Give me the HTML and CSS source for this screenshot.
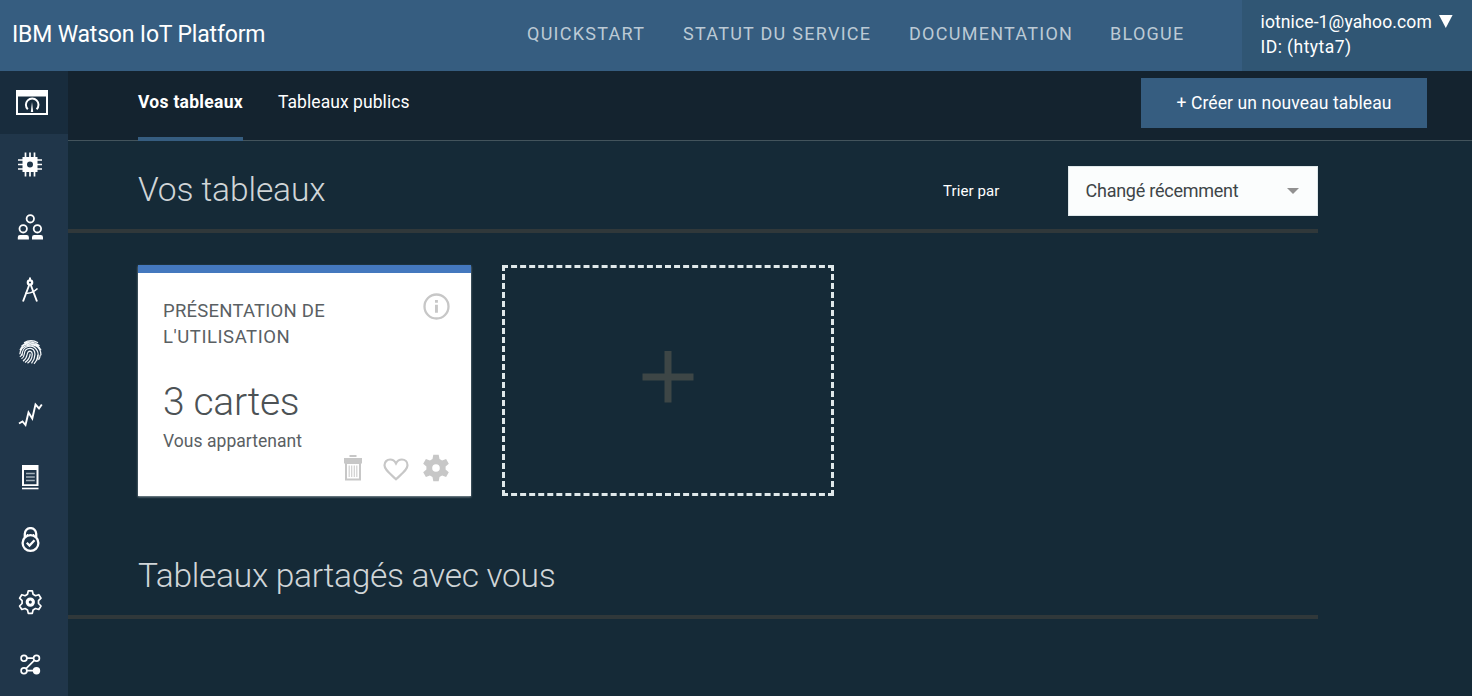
FILE: index.html
```html
<!DOCTYPE html>
<html lang="fr">
<head>
<meta charset="utf-8">
<title>IBM Watson IoT Platform</title>
<link rel="stylesheet" href="styles.css">
</head>
<body>
<header class="topbar">
  <div class="brand">IBM Watson IoT Platform</div>
  <nav class="links">
    <a class="link-quick">QUICKSTART</a>
    <a class="link-status">STATUT DU SERVICE</a>
    <a class="link-docs">DOCUMENTATION</a>
    <a class="link-blog">BLOGUE</a>
  </nav>
  <div class="account">
    <div class="account-row"><span class="mail">iotnice-1@yahoo.com</span><svg class="caret" width="14" height="13" viewBox="0 0 14 13"><path d="M0 0h13.600L6.800 13z" fill="#fff"/></svg></div>
    <div class="account-id">ID: (htyta7)</div>
  </div>
</header>
<div class="shell">
  <aside class="rail">
    <a class="rail-item active"><svg width="32" height="26" viewBox="0 0 32 26"><path fill="#fff" fill-rule="evenodd" d="M0 0h32v25H0zM2 6.500V23h28V6.500z"/><path d="M11.800 19.300a6.300 6.300 0 1 1 8.800 0" fill="none" stroke="#fff" stroke-width="2"/><path d="M16 12l1.200 10h-2.400z" fill="#fff"/></svg></a>
    <a class="rail-item"><svg width="26" height="26" viewBox="0 0 26 26"><path d="M8.500 .500v5M13 .500v5M17.500 .500v5M8.500 19.500v5M13 19.500v5M17.500 19.500v5M1 8h5M1 12.500h5M1 17h5M20 8h5M20 12.500h5M20 17h5" stroke="#fff" stroke-width="1.700"/><path fill="#fff" fill-rule="evenodd" d="M5.500 5h15v15h-15zM13 9.500a3 3 0 1 0 0 6 3 3 0 0 0 0-6z"/></svg></a>
    <a class="rail-item"><svg width="26" height="26" viewBox="0 0 26 26"><g fill="none" stroke="#fff" stroke-width="1.800"><circle cx="13.300" cy="4.800" r="3.700"/><circle cx="6.200" cy="14.800" r="3.700"/><circle cx="20.400" cy="14.800" r="3.700"/></g><path fill="#fff" d="M.800 25.500v-2.300q0-2.200 2.200-2.200h6.700q2.200 0 2.200 2.200v2.300zM15 25.500v-2.300q0-2.200 2.200-2.200h6.600q2.200 0 2.200 2.200v2.300z"/></svg></a>
    <a class="rail-item"><svg width="26" height="26" viewBox="0 0 26 26"><g fill="none" stroke="#fff"><path d="M13 .500v3" stroke-width="2"/><circle cx="13" cy="5.500" r="2.200" stroke-width="2.200"/><path d="M12.200 8L6 24.500M13.800 8L20 24.500" stroke-width="1.900"/><path d="M8.500 16q6 1.200 12-4.500" stroke-width="1.600"/></g></svg></a>
    <a class="rail-item"><svg width="26" height="26" viewBox="0 0 26 26"><g transform="translate(1 .3)" fill="none" stroke="#f4f7f9" stroke-width="1.250"><path d="M6 3.500Q13-1 20 3.500M3.500 7Q12-1 21.500 6.500M2 11C5 2 19 2 23 11M1.800 15C3 4 17 3 21.500 10c1.300 2.300 1.500 4.500 1.500 6M4 16.500c0-11 11-12 15-5.500 1.600 3 1.500 7-.500 10.500M3.500 19.500C8 17 5 13 8 10.500c3-2.800 7.500-1.500 8.600 2 .900 3.500-.500 8-3.100 11.500M5 21.800c5-3 3.400-7 5-9 1.600-1.700 4-.600 4.200 1.700.200 3.500-2 7.500-4.700 9.500M7 23.300c4-3 5-6 5.200-9M16 24.500c2-2 3.500-5 3.800-9M1.800 17.500q2-1 2-3M20.500 20.500q1.500-2 1.800-5"/></g></svg></a>
    <a class="rail-item"><svg width="26" height="26" viewBox="0 0 26 26"><path d="M2 21.500l3.500-2L8.500 23l3-12.500 3.800 6L18.500 2.500l3.500 4 2.800-4" fill="none" stroke="#fff" stroke-width="1.900"/></svg></a>
    <a class="rail-item"><svg width="26" height="26" viewBox="0 0 26 26"><path fill="#fff" fill-rule="evenodd" d="M5 1h16.500v21H5zM7 6v14.200h12.500V6z"/><path d="M9 9.500h8.800M9 13h8.800M9 16.500h8.800" stroke="#a3b0b9" stroke-width="1.700"/><path d="M5 24.500h16.500" stroke="#fff" stroke-width="1.600"/></svg></a>
    <a class="rail-item"><svg width="26" height="26" viewBox="0 0 26 26"><g transform="translate(0 -.5)" fill="none" stroke="#fff" stroke-width="2.300"><circle cx="13.500" cy="16.500" r="7.900"/><path d="M7.800 10.500V7.300a5.700 5.700 0 0 1 11.400 0v3.200"/><path d="M10.400 7.500v2M16.600 7.500v2" stroke-width="1.300"/><path d="M9.800 16.300l2.700 2.700 5-5.200" stroke-width="2.300"/></g></svg></a>
    <a class="rail-item"><svg width="26" height="26" viewBox="0 0 26 26"><g fill="none" stroke="#fff"><path d="M11.300 1.800h4l.800 3.500 2.400 1.400 3.300-1 2.200 3.500-2.500 2.500v2.800l2.500 2.500-2.200 3.500-3.300-1-2.400 1.400-.800 3.500h-4l-.800-3.500-2.400-1.400-3.300 1L2.600 17l2.500-2.500v-2.800L2.600 9.200l2.200-3.500 3.300 1 2.400-1.400z" stroke-width="1.700" stroke-linejoin="round"/><circle cx="13.300" cy="13.100" r="3.100" stroke-width="3.100"/></g></svg></a>
    <a class="rail-item"><svg width="26" height="26" viewBox="0 0 26 26"><g transform="translate(0 -.5)"><g fill="none" stroke="#fff" stroke-width="1.700"><circle cx="7" cy="6.700" r="2.900"/><circle cx="19.500" cy="6.700" r="2.900"/><circle cx="7" cy="19.200" r="2.900"/><path d="M10 6.700h6.500M17.300 8.800L9 17.200M10 19.200h7"/></g><circle cx="19.500" cy="19.200" r="3.700" fill="#fff"/></g></svg></a>
  </aside>
  <main class="main">
    <div class="tabs">
      <a class="tab selected"><span class="t-own">Vos tableaux</span></a>
      <a class="tab"><span class="t-public">Tableaux publics</span></a>
      <button class="create"><span>+ Créer un nouveau tableau</span></button>
    </div>
    <section class="boards">
      <div class="section-head">
        <h2 class="h-own">Vos tableaux</h2>
        <span class="sort-label">Trier par</span>
        <div class="select"><span>Changé récemment</span><svg width="12" height="6" viewBox="0 0 12 6"><path d="M0 0h12L6 6z" fill="#919191"/></svg></div>
      </div>
      <div class="cards">
        <article class="card">
          <div class="card-top">
            <h3><span class="n1">PRÉSENTATION DE</span><br><span class="n2">L'UTILISATION</span></h3>
            <svg width="28" height="28" viewBox="0 0 28 28"><circle cx="14.500" cy="14.500" r="12" fill="none" stroke="#c7c7c7" stroke-width="2.300"/><path d="M13 8h2.900v2.700H13zM13 12.800h2.900v8H13z" fill="#c7c7c7"/></svg>
          </div>
          <div class="count">3 cartes</div>
          <div class="owner">Vous appartenant</div>
          <div class="actions">
            <svg class="trash" width="18" height="26" viewBox="0 0 18 26"><path fill="#c7c7c7" fill-rule="evenodd" d="M5.500 0h7v2h-7zM0 3h18v5.500h-1V25.500H1V8.500H0zM3 9v14.500h12V9z"/><path d="M5.200 10.500V22M7.700 10.500V22M10.300 10.500V22M12.800 10.500V22" stroke="#d0d0d0" stroke-width="1.200"/></svg>
            <svg class="heart" width="26" height="23" viewBox="0 0 26 23"><path d="M13 21.200C7 15.500 1.500 11.800 1.500 7.200c0-3.300 2.500-5.700 5.600-5.700 2.300 0 4.500 1.300 5.900 3.900 1.400-2.600 3.600-3.900 5.900-3.900 3.100 0 5.600 2.400 5.600 5.700 0 4.600-5.500 8.300-11.500 14z" fill="none" stroke="#c7c7c7" stroke-width="2.200"/></svg>
            <svg class="gear" width="28" height="28" viewBox="0 0 28 28"><path fill="#c7c7c7" fill-rule="evenodd" d="M11.300.800h5.400l.800 4.200 2.600 1.500 4-1.500 2.700 4.700-3.200 2.800v3l3.200 2.800-2.700 4.700-4-1.500-2.600 1.500-.800 4.200h-5.400l-.800-4.200-2.600-1.500-4 1.500-2.700-4.700 3.200-2.800v-3L1.200 9.700 3.900 5l4 1.500L10.500 5zM14 10.200a3.800 3.800 0 1 0 0 7.600 3.800 3.800 0 0 0 0-7.600z"/></svg>
          </div>
        </article>
        <div class="add"><svg width="52" height="52" viewBox="0 0 52 52"><path d="M26 0v51.500M.500 26h51" stroke="#3d4646" stroke-width="7"/></svg></div>
      </div>
    </section>
    <section class="shared">
      <div class="section-head"><h2 class="h-shared">Tableaux partagés avec vous</h2></div>
    </section>
  </main>
</div>
</body>
</html>
```
FILE: styles.css
```css
* { box-sizing: border-box; }
body { margin: 0; height: 696px; overflow: hidden; background: #152a37; color: #fff; font-family: Roboto, "Noto Sans", sans-serif; font-size: 17px; }
h2, h3 { margin: 0; }
span, a { white-space: nowrap; }
svg { display: block; flex: none; }

.topbar { display: flex; height: 71px; background: #365d80; }
.brand { width: 527px; padding: 1px 0 0 12px; line-height: 68px; font-size: 23px; letter-spacing: -0.18px; }
.links { display: flex; flex: 1; color: #bccad5; font-size: 18px; line-height: 68px; letter-spacing: 1.270px; }
.link-quick { width: 156px; }
.link-status { width: 226px; }
.link-docs { width: 201px; }
.account { width: 230px; padding: 10px 0 0 18.500px; background: #305674; font-size: 17.500px; line-height: 25px; letter-spacing: 0.120px; }
.account-id { letter-spacing: 0.450px; }
.account-row { display: flex; align-items: center; }
.caret { margin-top: -2px; }
.mail { width: 178px; }

.shell { display: grid; grid-template-columns: 68px 1fr; height: 625px; }
.rail { background: #20364a; }
.rail-item { display: flex; align-items: center; justify-content: center; height: 62.500px; padding: 0 7.500px 1.500px 0; }
.rail-item.active { height: 63px; padding: 0 4px 0 0; background: #182c3d; }

.tabs { display: flex; height: 70px; padding: 0 45px 0 70px; background: #14232f; border-bottom: 1px solid #43545c; }
.tab { height: 70px; line-height: 62px; margin-right: 35px; font-size: 17.500px; letter-spacing: 0.060px; }
.tab.selected { width: 105px; font-weight: 700; letter-spacing: 0.280px; border-bottom: 4px solid #365d80; }
.create { width: 286px; height: 50px; margin: 7px 0 0 auto; padding: 0; border: 0; background: #365d80; color: #fff; font: 17.500px/50px Roboto, sans-serif; letter-spacing: 0.120px; }

.section-head { display: flex; align-items: center; width: 1250px; height: 92px; padding: 12px 0 0 70px; border-bottom: 4px solid #30383a; }
h2 { font-size: 33.500px; line-height: 44px; font-weight: 300; color: #d0d5d7; letter-spacing: -0.100px; margin-top: -2px; }
.h-shared { letter-spacing: -0.290px; }
.sort-label { margin-left: auto; width: 125px; font-size: 15px; letter-spacing: 0.100px; }
.select { display: flex; align-items: center; justify-content: space-between; width: 250px; height: 50px; padding: 0 18px 0 16.500px; background: #fbfdfd; border: 1px solid #dfe8ea; color: #3e4548; font-size: 18px; line-height: 46px; letter-spacing: -0.250px; }
.cards { display: flex; gap: 31px; padding: 32px 0 0 70px; }
.card { width: 333px; height: 231px; padding: 25px 21px 0 25px; border-top: 8px solid #4478be; background: #fff; color: #5a6063; box-shadow: 0 1px 2px #87969c; }
.card-top { display: flex; justify-content: space-between; height: 78px; }
.card-top svg { margin-top: -6px; }
h3 { font-size: 18.500px; line-height: 26px; font-weight: 400; letter-spacing: 0.230px; }
.n2 { letter-spacing: 0.550px; }
.count { height: 52px; line-height: 53px; font-size: 39px; font-weight: 300; letter-spacing: -0.300px; color: #4c5255; }
.owner { height: 27px; line-height: 27px; font-size: 17.500px; letter-spacing: 0.040px; }
.actions { display: flex; align-items: flex-start; justify-content: flex-end; }
.trash { margin-right: 0.500px; }
.heart { margin: 3px 13px 0 21px; }
.gear { margin-top: -1px; }
.add { display: flex; align-items: center; justify-content: center; width: 332px; height: 231px; padding-bottom: 7px; border: 3px dashed #dfe8ea; }
.shared { padding-top: 31px; }
.shared .section-head { height: 92px; padding-top: 12px; }
```
